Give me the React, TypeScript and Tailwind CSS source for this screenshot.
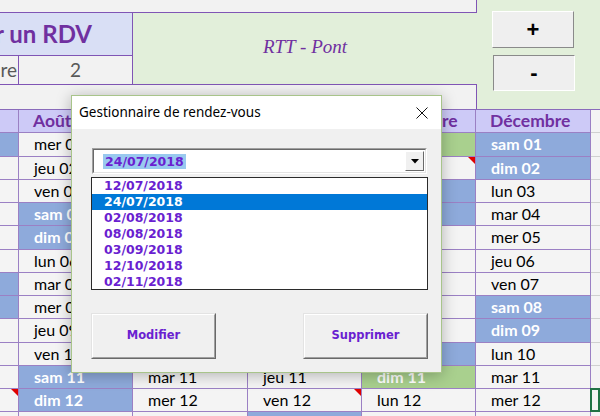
import React from "react";

const DAYS = ["dim", "lun", "mar", "mer", "jeu", "ven", "sam"];

const months = [
  { name: "Juillet", m: 6, showText: false },
  { name: "Août", m: 7, showText: true },
  { name: "Septembre", m: 8, showText: true },
  { name: "Octobre", m: 9, showText: true },
  { name: "Novembre", m: 10, showText: true },
  { name: "Décembre", m: 11, showText: true },
];

// month index (0-based) - day
const holidays = ["6-14", "7-15", "10-1", "10-11", "11-25"];
const comments = ["6-12", "9-12", "10-2"];

const rdvs = [
  "12/07/2018",
  "24/07/2018",
  "02/08/2018",
  "08/08/2018",
  "03/09/2018",
  "12/10/2018",
  "02/11/2018",
];

const ROWS = 13;

function DayCell({ m, d, showText }: { m: number; d: number; showText: boolean }) {
  const wd = new Date(2018, m, d).getDay();
  const key = `${m}-${d}`;
  const holiday = holidays.includes(key);
  const weekend = wd === 0 || wd === 6;
  const look = holiday
    ? "bg-[#a9d08e] text-white font-bold"
    : weekend
    ? "bg-[#8eaadb] text-white font-bold"
    : "bg-[#f4f4f4] text-black";
  return (
    <div className={`relative flex items-center overflow-hidden whitespace-nowrap border-r border-b border-[#9b80c4] pl-[15px] text-[16px] leading-none ${look}`}>
      {showText && `${DAYS[wd]} ${String(d).padStart(2, "0")}`}
      {comments.includes(key) && (
        <span className="absolute top-0 right-0 h-0 w-0 border-t-[7px] border-l-[7px] border-t-[#e00000] border-l-transparent" />
      )}
    </div>
  );
}

function Dialog() {
  return (
    <div className="absolute left-[71px] top-[95px] flex h-[278px] w-[371px] flex-col border border-[#a8c48a] shadow-[0_2px_14px_rgba(0,0,0,0.28)]">
      {/* title bar */}
      <div className="flex h-[33px] items-center justify-between bg-white pl-[7px] pr-[13px] font-['Noto_Sans',sans-serif] text-[13.5px] text-black">
        <span>Gestionnaire de rendez-vous</span>
        <svg width="12" height="12" viewBox="0 0 12 12">
          <path d="M0.5 0.5 L11.5 11.5 M11.5 0.5 L0.5 11.5" stroke="#111" strokeWidth="1" />
        </svg>
      </div>

      <div className="flex flex-1 flex-col bg-[#f0f0f0] pt-[19px] pl-[20px] font-['DejaVu_Sans',sans-serif] font-bold text-[#6a1fd0]">
        {/* combo box */}
        <div className="h-[26px] w-[335px] border border-t-[#a0a0a0] border-l-[#a0a0a0] border-b-white border-r-white">
          <div className="flex h-full items-center border border-t-[#696969] border-l-[#696969] border-b-[#e3e3e3] border-r-[#e3e3e3] bg-white">
            <span className="ml-[9px] bg-[#99c9ef] px-[2px] text-[12.5px] leading-[15px]">24/07/2018</span>
            <div className="ml-auto mr-px flex h-[20px] w-[19px] items-center justify-center border border-t-white border-l-white border-b-[#696969] border-r-[#696969] bg-[#f0f0f0]">
              <svg width="8" height="5" viewBox="0 0 8 5">
                <path d="M0 0 H8 L4 4.5 Z" fill="#000" />
              </svg>
            </div>
          </div>
        </div>

        {/* list box */}
        <div className="-ml-px mt-[3px] h-[113px] w-[337px] border border-[#2b2b2b] bg-white">
          {rdvs.map((r) => (
            <div
              key={r}
              className={`h-[16px] pl-[12px] text-[12.5px] leading-[16px] ${
                r === "24/07/2018" ? "bg-[#0078d7] text-white" : ""
              }`}
            >
              {r}
            </div>
          ))}
        </div>

        {/* actions */}
        <div className="-ml-px mt-[23px] flex w-[337px] justify-between">
          {["Modifier", "Supprimer"].map((b) => (
            <div key={b} className="h-[46px] w-[125px] border border-t-[#e3e3e3] border-l-[#e3e3e3] border-b-[#696969] border-r-[#696969]">
              <div className="flex h-full items-center justify-center border border-t-white border-l-white border-b-[#a0a0a0] border-r-[#a0a0a0] bg-[#f0f0f0] text-[11.5px]">
                {b}
              </div>
            </div>
          ))}
        </div>
      </div>
    </div>
  );
}

export default function App() {
  return (
    <div className="relative h-[416px] w-[600px] overflow-hidden bg-white font-['Lato',sans-serif]">
      {/* top area */}
      <div className="flex h-[109px]">
        <div className="flex w-[477px] flex-col">
          <div className="h-[13px] border-r border-b border-[#8055b5] bg-[#f2f2f2]" />
          <div className="flex h-[71px]">
            <div className="flex w-[133px] flex-col border-r border-[#8055b5]">
              <div className="flex h-[46px] items-center justify-end overflow-hidden whitespace-nowrap border-b border-[#8055b5] bg-[#d9dff5] pr-[40px] text-[24px] font-bold text-[#7030a0]">
                Ajouter un RDV
              </div>
              <div className="flex flex-1 bg-[#f2f2f2] text-[19px] text-[#595959]">
                <div className="flex w-[19px] items-center justify-end overflow-hidden whitespace-nowrap border-r border-[#8055b5] pr-[1px]">
                  Heure
                </div>
                <div className="flex flex-1 items-center justify-center">2</div>
              </div>
            </div>
            <div className="flex flex-1 items-center justify-center bg-[#e2efda] pb-[2px] font-['Liberation_Serif',serif] text-[19px] italic text-[#7030a0]">
              RTT - Pont
            </div>
          </div>
          <div className="flex-1 border-t border-r border-[#8055b5] bg-[#f2f2f2]" />
        </div>

        <div className="flex flex-1 flex-col gap-[7px] bg-[#e2efda] pt-[11px] pl-[15px] font-['Liberation_Sans',sans-serif] font-bold text-black">
          <div className="flex h-[37px] w-[82px] items-center justify-center border border-t-white border-l-white border-b-[#8a8a8a] border-r-[#8a8a8a] bg-[#efefef] text-[22px] leading-none">
            +
          </div>
          <div className="ml-px flex h-[36px] w-[82px] items-center justify-center border border-t-[#8a8a8a] border-l-[#8a8a8a] border-b-white border-r-white bg-[#efefef] text-[22px] leading-none">
            -
          </div>
        </div>
      </div>

      {/* calendar grid */}
      <div className="grid auto-rows-[23.25px] grid-cols-[19px_114px_115px_114px_114px_115px_9px] border-t border-[#8a6bbb]">
        {months.map((mo) => (
          <div
            key={mo.name}
            className="flex items-center overflow-hidden whitespace-nowrap border-r border-b border-[#9b80c4] bg-[#cdcaf7] pl-[14px] text-[17.5px] font-bold leading-none text-[#7030a0]"
          >
            {mo.showText && mo.name}
          </div>
        ))}
        <div className="border-b border-[#d0d0d0] bg-[#f4f4f4]" />

        {Array.from({ length: ROWS }, (_, i) => i + 1).map((d) => (
          <React.Fragment key={d}>
            {months.map((mo) => (
              <DayCell key={mo.name} m={mo.m} d={d} showText={mo.showText} />
            ))}
            <div className="relative border-b border-[#d0d0d0] bg-[#f4f4f4]">
              {d === 12 && <span className="absolute -top-px -bottom-px -left-px right-0 border-2 border-[#217346]" />}
            </div>
          </React.Fragment>
        ))}
      </div>

      <Dialog />
    </div>
  );
}
